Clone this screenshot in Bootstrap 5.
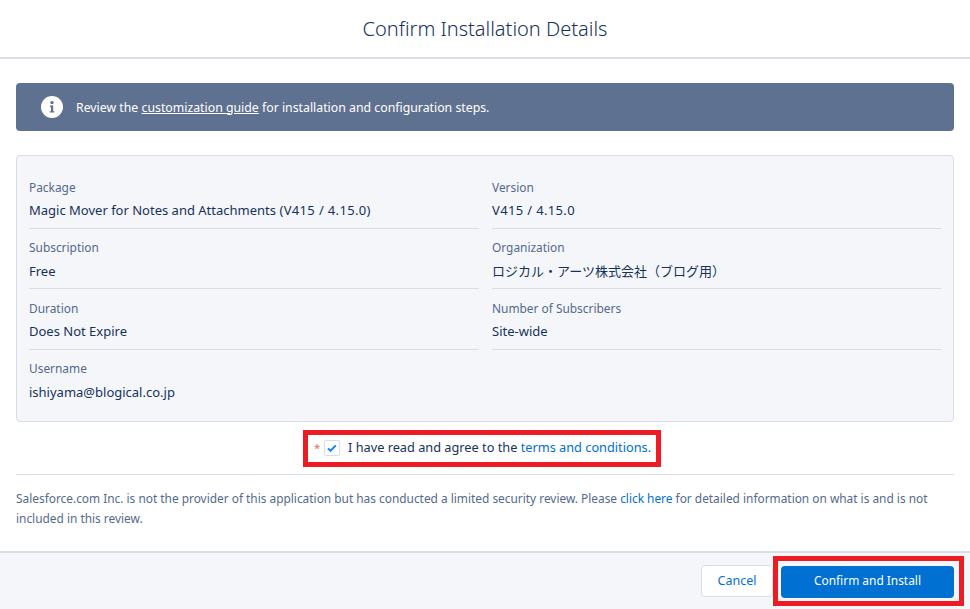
<!DOCTYPE html>
<html lang="en">
<head>
<meta charset="utf-8">
<title>Confirm Installation Details</title>
<link href="https://cdn.jsdelivr.net/npm/bootstrap@5.3.0/dist/css/bootstrap.min.css" rel="stylesheet">
<style>
html,body{height:609px;overflow:hidden}
body{font-family:"Noto Sans","Noto Sans CJK JP",sans-serif;font-size:13px;color:#16325c;background:#fff;line-height:1.5}
.shell{height:609px}
.head{height:59px;border-bottom:2px solid #d8dde6}
.head h1{font-size:20px;font-weight:300;margin:0;color:#16325c;font-family:"Noto Sans",sans-serif}
.content{padding:24px 16px 0}
.notice{height:48px;background:#5f7190;color:#fff;border-radius:4px;padding-left:25px;gap:13px;font-size:12.3px;margin-bottom:24px}
.notice span{padding-top:2px}
.notice a{color:#fff}
.panel{height:267px;background:#f4f6f9;border:1px solid #d8dde6;border-radius:4px;padding:12px 12px 0;column-gap:13px}
.info{width:450px}
.info.second{width:449px}
.item{height:60.5px;padding-top:9.5px;border-bottom:1px solid #d8dde6}
.item.last{border-bottom:0}
.lbl{font-size:11.9px;color:#54698d;line-height:18px;margin-bottom:5.5px}
.val{line-height:18px}
.ver{letter-spacing:.35px}
.agree-wrap{margin-top:8px;height:37px;padding-right:6px}
.agree{border:5px solid #ed1c24;height:37px;width:358px;padding-left:6px;padding-bottom:1px;white-space:nowrap;font-size:12.75px}
.req{color:#d9706d;font-size:11px;width:10px}
.tick{width:16px;height:16px;flex:none;border:1px solid #d8dde6;border-radius:2px;background:#fff;margin-right:8px}
.agree a,.note a{color:#0070d2;text-decoration:none}
.rule{border-top:1px solid #d8dde6;margin-top:7px}
.note{font-size:11.88px;line-height:20px;padding-top:13px;color:#54698d}
.foot{height:58px;background:#f4f6f9;border-top:2px solid #d8dde6;margin-top:auto;padding-right:6px}
.btn-cancel{width:72px;height:32px;font-size:12.5px;padding:0;color:#0070d2;background:#fff;border:1px solid #d8dde6;border-radius:4px}
.btn-cancel:hover{color:#0070d2;background:#fff;border-color:#d8dde6}
.hl{border:5px solid #ed1c24;padding:5px 5px 3px 3px;width:191px;height:50px}
.btn-go{width:100%;height:100%;font-size:11.9px;padding:0 0 2px;color:#fff;background:#0070d2;border:0;border-radius:4px}
.btn-go:hover{color:#fff;background:#0070d2}
</style>
</head>
<body>
<div class="shell d-flex flex-column">
  <header class="head d-flex align-items-center justify-content-center">
    <h1>Confirm Installation Details</h1>
  </header>
  <main class="content">
    <div class="notice d-flex align-items-center">
      <svg width="22" height="22" viewBox="0 0 22 22" aria-hidden="true"><circle cx="11" cy="11" r="11" fill="#fff"/><circle cx="11" cy="6.6" r="1.7" fill="#5f7190"/><path d="M9 9.6h3.2v5.6H13.4v1.4H8.8v-1.4H10V11H9z" fill="#5f7190"/></svg>
      <span>Review the <a href="#">customization guide</a> for installation and configuration steps.</span>
    </div>
    <section class="panel d-flex">
      <div class="info">
        <div class="item"><div class="lbl">Package</div><div class="val">Magic Mover for Notes and Attachments <span class="ver">(V415 / 4.15.0)</span></div></div>
        <div class="item"><div class="lbl">Subscription</div><div class="val">Free</div></div>
        <div class="item"><div class="lbl">Duration</div><div class="val">Does Not Expire</div></div>
        <div class="item last"><div class="lbl">Username</div><div class="val">ishiyama@blogical.co.jp</div></div>
      </div>
      <div class="info second">
        <div class="item"><div class="lbl">Version</div><div class="val"><span class="ver">V415 / 4.15.0</span></div></div>
        <div class="item"><div class="lbl">Organization</div><div class="val">ロジカル・アーツ株式会社（ブログ用）</div></div>
        <div class="item"><div class="lbl">Number of Subscribers</div><div class="val">Site-wide</div></div>
      </div>
    </section>
    <div class="agree-wrap d-flex justify-content-center">
      <div class="agree d-flex align-items-center">
        <span class="req">*</span>
        <span class="tick d-inline-flex align-items-center justify-content-center">
          <svg width="10" height="8" viewBox="0 0 10 8" aria-hidden="true"><path d="M1 4.4 3.6 6.8 8.8 1.4" fill="none" stroke="#1589ee" stroke-width="2"/></svg>
        </span>
        <span>I have read and agree to the <a href="#">terms and conditions.</a></span>
      </div>
    </div>
    <div class="rule"></div>
    <p class="note mb-0">Salesforce.com Inc. is not the provider of this application but has conducted a limited security review. Please <a href="#">click here</a> for detailed information on what is and is not included in this review.</p>
  </main>
  <footer class="foot d-flex align-items-center justify-content-end">
    <button type="button" class="btn btn-cancel">Cancel</button>
    <div class="hl"><button type="button" class="btn btn-go">Confirm and Install</button></div>
  </footer>
</div>
<script src="https://cdn.jsdelivr.net/npm/bootstrap@5.3.0/dist/js/bootstrap.bundle.min.js"></script>
</body>
</html>
